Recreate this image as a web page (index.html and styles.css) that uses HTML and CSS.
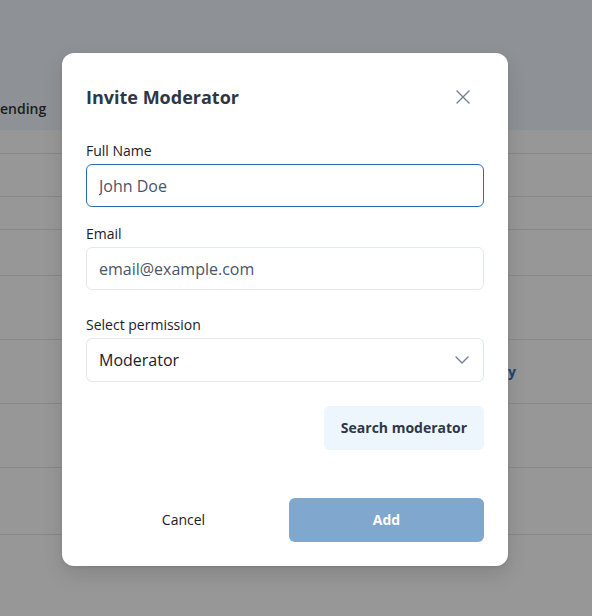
FILE: index.html
```html
<!DOCTYPE html>
<html>
<head>
<meta charset="utf-8">
<link rel="stylesheet" href="styles.css">
</head>
<body>
<div class="page">
  <div class="table-head"><span class="head-cell">ending</span></div>
  <div class="row r1"></div>
  <div class="row r2"></div>
  <div class="row r3"></div>
  <div class="row r4"></div>
  <div class="row r5"></div>
  <div class="row r6"><span class="row-action">Apply</span></div>
  <div class="row r7"></div>
  <div class="row r8"></div>
</div>

<div class="modal">
  <div class="modal-header">
    <h2 class="modal-title">Invite Moderator</h2>
    <button class="close-btn" aria-label="Close">
      <svg width="14" height="14" viewBox="0 0 14 14"><path d="M1 1L13 13M13 1L1 13" stroke="#718096" stroke-width="1.4" fill="none" stroke-linecap="round"/></svg>
    </button>
  </div>

  <div class="field f-name">
    <label class="label">Full Name</label>
    <input class="input focused" type="text" value="John Doe">
  </div>

  <div class="field f-email">
    <label class="label">Email</label>
    <input class="input" type="text" placeholder="email@example.com">
  </div>

  <div class="field f-perm">
    <label class="label">Select permission</label>
    <div class="select">
      <span class="select-value">Moderator</span>
      <svg width="14" height="8" viewBox="0 0 14 8"><path d="M1 1L7 7L13 1" stroke="#718096" stroke-width="1.4" fill="none" stroke-linecap="round" stroke-linejoin="round"/></svg>
    </div>
  </div>

  <div class="search-row">
    <button class="search-btn">Search moderator</button>
  </div>

  <div class="footer">
    <button class="cancel-btn">Cancel</button>
    <button class="add-btn">Add</button>
  </div>
</div>
</body>
</html>
```

FILE: styles.css
```css
* { box-sizing: border-box; }
html, body {
  margin: 0;
  padding: 0;
}
body {
  width: 592px;
  height: 616px;
  overflow: hidden;
  background: #979797;
  font-family: "Open Sans", "Noto Sans", sans-serif;
  position: relative;
}
.page {
  display: flex;
  flex-direction: column;
}
.table-head {
  height: 130px;
  background: #8e9296;
  display: flex;
  align-items: flex-end;
  padding-bottom: 11px;
}
.head-cell {
  font-size: 14px;
  font-weight: 600;
  color: #1b1d20;
  line-height: 20px;
}
.row {
  border-bottom: 1px solid #858788;
  display: flex;
  align-items: center;
  justify-content: flex-end;
}
.r1 { height: 24px; }
.r2 { height: 43px; }
.r3 { height: 33px; }
.r4 { height: 46px; }
.r5 { height: 64px; }
.r6 { height: 64px; padding-right: 76px; }
.r7 { height: 64px; }
.r8 { height: 67px; }
.row-action {
  font-size: 14px;
  font-weight: 700;
  color: #1f4470;
}

.modal {
  position: absolute;
  left: 62px;
  top: 53px;
  width: 446px;
  height: 513px;
  background: #ffffff;
  border-radius: 12px;
  box-shadow: 0 8px 20px rgba(0, 0, 0, 0.12), 0 1px 3px rgba(0, 0, 0, 0.08);
  padding: 30px 24px 24px 24px;
  display: flex;
  flex-direction: column;
}
.modal-header {
  display: flex;
  align-items: center;
  justify-content: space-between;
  height: 28px;
}
.modal-title {
  margin: 0;
  font-size: 18px;
  font-weight: 700;
  color: #2d3748;
  line-height: 28px;
}
.close-btn {
  border: none;
  background: none;
  padding: 0;
  width: 14px;
  height: 14px;
  margin-right: 14px;
  display: flex;
}
.field {
  display: flex;
  flex-direction: column;
}
.f-name { margin-top: 30px; }
.f-email { margin-top: 17px; }
.f-perm { margin-top: 25px; }
.label {
  font-size: 14px;
  line-height: 20px;
  color: #1a202c;
  margin-bottom: 3px;
}
.input {
  height: 43px;
  width: 100%;
  border: 1px solid #e2e8f0;
  border-radius: 6px;
  padding: 0 12px;
  font-family: "Open Sans", "Noto Sans", sans-serif;
  font-size: 16px;
  color: #4a5568;
  outline: none;
  background: #fff;
}
.input::placeholder { color: #4a5568; opacity: 1; }
.input.focused { border-color: #2b6cb0; }
.select {
  height: 44px;
  border: 1px solid #e2e8f0;
  border-radius: 6px;
  padding: 0 14px 0 12px;
  display: flex;
  align-items: center;
  justify-content: space-between;
}
.select-value {
  font-size: 16px;
  color: #1a202c;
}
.search-row {
  display: flex;
  justify-content: flex-end;
  margin-top: 24px;
}
.search-btn {
  width: 160px;
  height: 44px;
  border: none;
  border-radius: 6px;
  background: #edf5fd;
  font-family: "Open Sans", "Noto Sans", sans-serif;
  font-size: 14px;
  font-weight: 700;
  color: #2d3748;
  padding: 0 0 2px 0;
}
.footer {
  margin-top: auto;
  display: flex;
  gap: 8px;
}
.cancel-btn, .add-btn {
  flex: 1;
  height: 44px;
  border: none;
  border-radius: 6px;
  font-family: "Open Sans", "Noto Sans", sans-serif;
  font-size: 14px;
  padding: 0 0 2px 0;
}
.cancel-btn {
  background: transparent;
  color: #1a202c;
}
.add-btn {
  background: #80a7cd;
  color: #ffffff;
  font-weight: 700;
}
```
